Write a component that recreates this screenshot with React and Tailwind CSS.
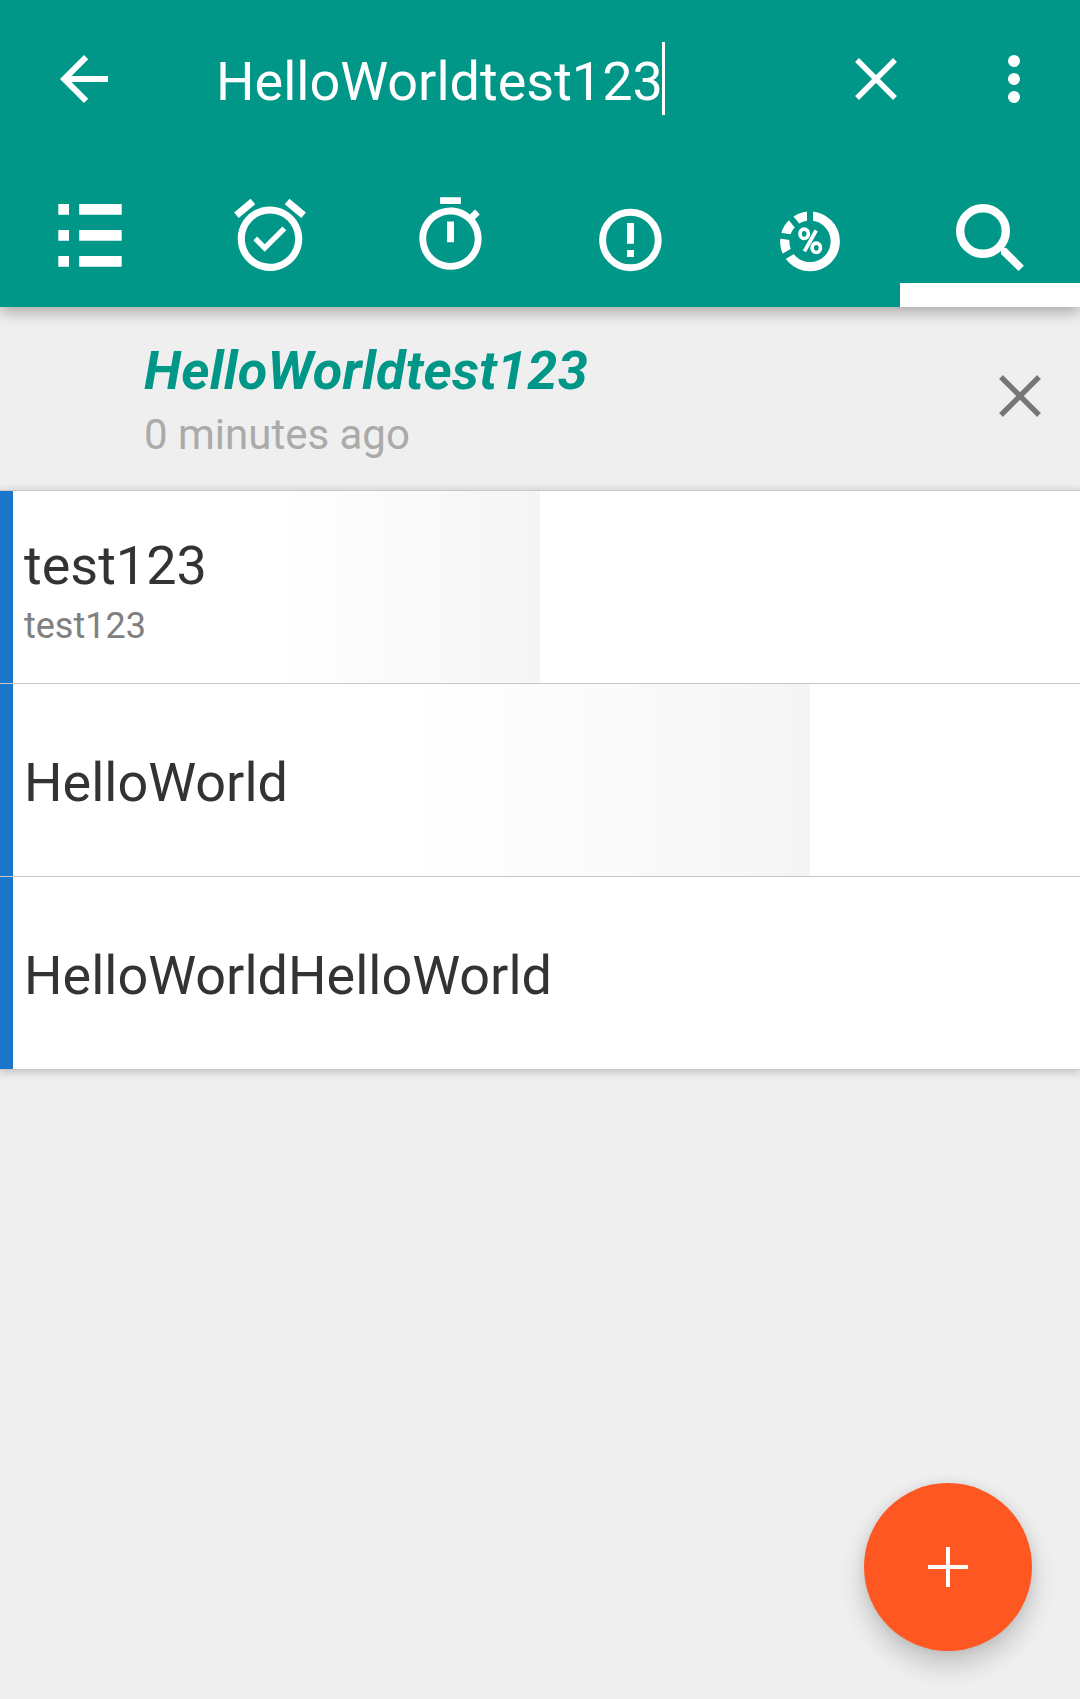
const TEAL = "#009688";

function Tab({ children, active }) {
  return (
    <div className="relative flex h-[149px] w-[180px]">
      <svg width="180" height="149" viewBox="0 158 180 149" fill="#fff">
        {children}
      </svg>
      {active && <div className="absolute bottom-0 left-0 h-6 w-full bg-white" />}
    </div>
  );
}

function Cross({ color }) {
  return (
    <svg width="72" height="72" viewBox="-36 -36 72 72" stroke={color} strokeWidth="5.4">
      <path d="M-19-19L19 19M19-19L-19 19" />
    </svg>
  );
}

function Row({ title, note, bar }) {
  return (
    <div className="relative flex h-[193px] border-b border-[#c8c8c8] bg-white">
      <div className="w-[13px] bg-[#1976c8]" />
      {bar && <div className={"absolute left-0 top-0 h-[192px] " + bar} />}
      <div className={"relative flex flex-col justify-center pl-[11px] " + (note ? "pt-2.5" : "pt-[5px]")}>
        <div className="text-[54px] leading-[64px] text-[#333]">{title}</div>
        {note && <div className="mt-1 text-[36px] leading-[48px] text-[#808080]">{note}</div>}
      </div>
    </div>
  );
}

export default function App() {
  return (
    <div className="relative flex h-[1699px] w-[1080px] flex-col overflow-hidden bg-[#efefef] font-[Roboto,sans-serif]">
      <header className="relative z-10 flex h-[307px] flex-col bg-[#009688] shadow-[0_5px_14px_rgba(0,0,0,0.3)]">
        <div className="flex h-[158px] items-center">
          <svg className="ml-12" width="72" height="72" viewBox="0 0 24 24" fill="#fff">
            <path d="M20 11H7.83l5.59-5.59L12 4l-8 8 8 8 1.41-1.41L7.83 13H20v-2z" />
          </svg>
          <div className="ml-24 flex w-[624px] items-center">
            <span className="mt-1.5 text-[54px] leading-[64px] text-white">HelloWorldtest123</span>
            <span className="-ml-px mb-px h-[73px] w-[3px] bg-white" />
          </div>
          <Cross color="#fff" />
          <svg className="ml-[66px]" width="72" height="72" viewBox="0 0 24 24" fill="#fff">
            <circle cx="12" cy="6" r="2" />
            <circle cx="12" cy="12" r="2" />
            <circle cx="12" cy="18" r="2" />
          </svg>
        </div>
        <nav className="flex h-[149px]">
          <Tab>
            <path d="M58.3 204H69v10.7H58.3zM79.2 204h42.5v10.7H79.2zM58.3 230H69v10.7H58.3zM79.2 230h42.5v10.7H79.2zM58.3 256H69v10.7H58.3zM79.2 256h42.5v10.7H79.2z" />
          </Tab>
          <Tab>
            <g transform="translate(90 238.7) scale(3.59) translate(-12 -13)">
              <path d="M22 5.72l-4.6-3.86-1.29 1.53 4.6 3.86L22 5.72zM7.88 3.39L6.6 1.86 2 5.71l1.29 1.53 4.59-3.85zM10.54 14.53L8.41 12.4l-1.06 1.06 3.18 3.18 6-6-1.06-1.06-4.93 4.95zM12 4c-4.97 0-9 4.03-9 9s4.02 9 9 9c4.97 0 9-4.03 9-9s-4.03-9-9-9zm0 16c-3.87 0-7-3.13-7-7s3.13-7 7-7 7 3.13 7 7-3.13 7-7 7z" />
            </g>
          </Tab>
          <Tab>
            <g transform="translate(90.5 238.7) scale(3.46) translate(-12 -13)">
              <path d="M15 1H9v2h6V1zm-4 13h2V8h-2v6zm8.03-6.61l1.42-1.42c-.43-.51-.9-.99-1.41-1.41l-1.42 1.42C16.07 4.74 14.12 4 12 4c-4.97 0-9 4.03-9 9s4.02 9 9 9 9-4.03 9-9c0-2.12-.74-4.07-1.97-5.61zM12 20c-3.87 0-7-3.13-7-7s3.13-7 7-7 7 3.13 7 7-3.13 7-7 7z" />
            </g>
          </Tab>
          <Tab>
            <circle cx="90.4" cy="240" r="27.8" fill="none" stroke="#fff" strokeWidth="6.9" />
            <path d="M87 223h7v20.7h-7zM87 250h7v7h-7z" />
          </Tab>
          <Tab>
            <g transform="translate(90 241.3)">
              <circle r="25.3" fill="none" stroke="#fff" strokeWidth="9.2" />
              <g stroke={TEAL} strokeWidth="6">
                <path d="M0-18V-32M-12.5-15.2L-20.3-24.7M-18-3.9L-32-5.9" />
                <path d="M-15.8 9.1L-27.7 16" />
              </g>
              <g fill="none" stroke="#fff" strokeWidth="3.7">
                <ellipse cx="-5.8" cy="-7.5" rx="4.2" ry="4.7" />
                <ellipse cx="6.3" cy="6.5" rx="4.2" ry="4.7" />
                <path d="M6.2-10.8L-5.6 10" />
              </g>
            </g>
          </Tab>
          <Tab active>
            <circle cx="83" cy="231" r="22.8" fill="none" stroke="#fff" strokeWidth="8.4" />
            <path d="M101 250.7L102.3 247.7L106.3 248L123.9 265.7L118.6 271L101 254Z" />
          </Tab>
        </nav>
      </header>

      <section className="flex h-[183px] justify-between pl-36 pr-6">
        <div className="flex flex-col pt-8">
          <div className="text-[54px] font-bold italic leading-[64px] tracking-[0.2px] text-[#009688]">
            HelloWorldtest123
          </div>
          <div className="text-[42px] leading-[64px] text-[#aaa]">0 minutes ago</div>
        </div>
        <div className="pt-[53px]">
          <Cross color="#777" />
        </div>
      </section>

      <main className="border-t border-[#c8c8c8] shadow-[0_0_8px_rgba(0,0,0,0.16),0_6px_6px_rgba(0,0,0,0.06)]">
        <Row
          title="test123"
          note="test123"
          bar="w-[540px] bg-linear-to-r from-transparent from-50% to-black/4"
        />
        <Row title="HelloWorld" bar="w-[810px] bg-linear-to-r from-transparent from-50% to-black/4" />
        <Row title="HelloWorldHelloWorld" />
      </main>

      <button className="absolute bottom-12 right-12 flex size-[168px] items-center justify-center rounded-full bg-[#ff5722] shadow-[0_14px_26px_rgba(0,0,0,0.19),0_0_12px_rgba(0,0,0,0.08)]">
        <svg width="40" height="40" viewBox="0 0 40 40" fill="#fff">
          <path d="M18 0h4v18h18v4H22v18h-4V22H0v-4h18z" />
        </svg>
      </button>
    </div>
  );
}
